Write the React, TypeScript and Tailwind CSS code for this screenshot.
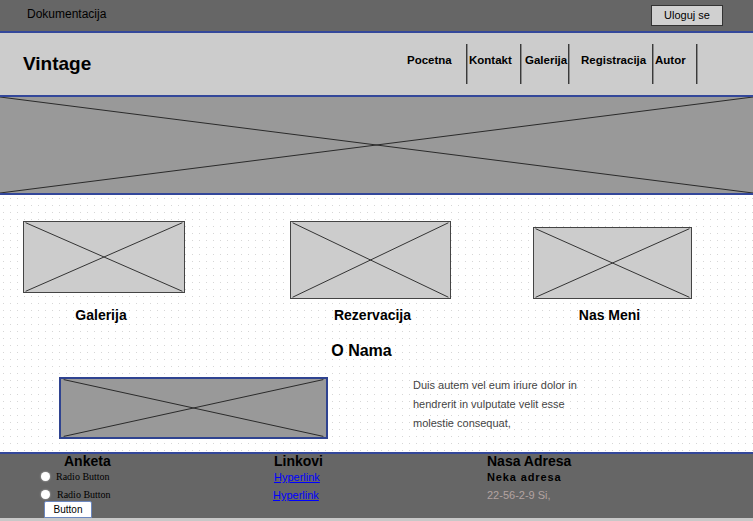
import React from 'react';

function XBox({ className, stroke = '#333', inset = 1 }: { className: string; stroke?: string; inset?: number }) {
  const a = inset;
  const b = 100 - inset;
  return (
    <div className={`relative ${className}`}>
      <svg className="absolute inset-0 h-full w-full" viewBox="0 0 100 100" preserveAspectRatio="none">
        <line x1={a} y1={a} x2={b} y2={b} stroke={stroke} strokeWidth="1" vectorEffect="non-scaling-stroke" />
        <line x1={a} y1={b} x2={b} y2={a} stroke={stroke} strokeWidth="1" vectorEffect="non-scaling-stroke" />
      </svg>
    </div>
  );
}

function NavSep() {
  return (
    <div className="flex h-full">
      <div className="w-px bg-[#3a3a3a]" />
      <div className="w-px bg-[#8a8a8a]" />
    </div>
  );
}

function Radio({ label, offset }: { label: string; offset: string }) {
  return (
    <div className="flex h-[18px] items-center">
      <div className="h-[9px] w-[9px] rounded-full bg-white shadow-[0_0_2px_#ccc]" />
      <span className={`${offset} font-['Liberation_Serif',serif] text-[10px] text-black`}>{label}</span>
    </div>
  );
}

export default function App() {
  const navItems = [
    { label: 'Pocetna', w: 'w-[59px]', pl: 'pl-0' },
    { label: 'Kontakt', w: 'w-[52px]', pl: 'pl-[1px]' },
    { label: 'Galerija', w: 'w-[46px]', pl: 'pl-[3px]' },
    { label: 'Registracija', w: 'w-[82px]', pl: 'pl-[11px]' },
    { label: 'Autor', w: 'w-[42px]', pl: 'pl-[1px]' },
  ];

  return (
    <div className="h-[521px] w-[753px] overflow-hidden bg-white font-['Liberation_Sans',Arial,sans-serif]">
      {/* top bar */}
      <div className="flex h-[31px] items-center justify-between bg-[#666666] pl-[27px] pr-[30px]">
        <span className="-mt-[4px] text-[12px] text-black">Dokumentacija</span>
        <button className="h-[21px] w-[72px] border border-[#333] bg-[#d0d0d0] text-[11px] text-black">Uloguj se</button>
      </div>
      <div className="h-[2px] bg-[#33479a]" />

      {/* nav */}
      <div className="flex h-[62px] items-center bg-[#cccccc]">
        <h1 className="pl-[23px] text-[19px] font-bold text-black">Vintage</h1>
        <div className="ml-auto mr-[55px] flex h-[40px]">
          {navItems.map((item) => (
            <React.Fragment key={item.label}>
              <div className={`${item.w} ${item.pl} pt-[10px] text-[11.5px] font-bold leading-[13px] text-black`}>{item.label}</div>
              <NavSep />
            </React.Fragment>
          ))}
        </div>
      </div>
      <div className="h-[2px] bg-[#33479a]" />

      {/* hero */}
      <XBox className="h-[96px] bg-[#999999]" stroke="#2a2a2a" inset={0} />
      <div className="h-[2px] bg-[#33479a]" />

      {/* main */}
      <div className="h-[257px] bg-white bg-[radial-gradient(#d6d6d6_0.7px,transparent_0.8px)] bg-[size:7px_7px] pt-[24px]">
        <div className="flex pl-[23px]">
          <div className="flex w-[162px] flex-col items-center">
            <div className="h-[80px] w-full pt-[2px]">
              <XBox className="h-[72px] w-full border border-[#444] bg-[#cccccc]" />
            </div>
            <div className="mt-[8px] pr-[6px] text-[14px] font-bold leading-[17px] text-black">Galerija</div>
          </div>
          <div className="ml-[105px] flex w-[161px] flex-col items-center">
            <div className="h-[80px] w-full pt-[2px]">
              <XBox className="h-[78px] w-full border border-[#444] bg-[#cccccc]" />
            </div>
            <div className="mt-[8px] pl-[4px] text-[14px] font-bold leading-[17px] text-black">Rezervacija</div>
          </div>
          <div className="ml-[82px] flex w-[159px] flex-col items-center">
            <div className="h-[80px] w-full pt-[8px]">
              <XBox className="h-[72px] w-full border border-[#444] bg-[#cccccc]" />
            </div>
            <div className="mt-[8px] pr-[6px] text-[14px] font-bold leading-[17px] text-black">Nas Meni</div>
          </div>
        </div>

        <h2 className="mt-[17px] pr-[30px] text-center text-[16px] font-bold leading-[20px] text-black">O Nama</h2>

        <div className="mt-[16px] flex pl-[59px]">
          <XBox className="h-[62px] w-[269px] border-2 border-[#2f4390] bg-[#999999]" stroke="#2a2a2a" />
          <p className="-mt-[1px] ml-[85px] text-[11px] leading-[19px] text-[#444]">
            Duis autem vel eum iriure dolor in
            <br />
            hendrerit in vulputate velit esse
            <br />
            molestie consequat,
          </p>
        </div>
      </div>

      {/* footer */}
      <div className="h-[2px] bg-[#33479a]" />
      <div className="flex h-[64px] bg-[#666666] pl-[41px]">
        <div className="flex w-[233px] flex-col items-start">
          <div className="pl-[23px] text-[14px] font-bold leading-[14px] text-black">Anketa</div>
          <Radio label="Radio Button" offset="ml-[6px]" />
          <Radio label="Radio Button" offset="ml-[7px]" />
          <button className="-mt-[2px] ml-[3px] block h-[17px] w-[48px] rounded-t-[2px] border border-[#6b87bf] bg-white text-[10px] leading-[14px] text-black">
            Button
          </button>
        </div>
        <div className="w-[213px]">
          <div className="text-[14px] font-bold leading-[14px] text-black">Linkovi</div>
          <a className="block text-[11px] leading-[18px] text-[#0000ff] underline">Hyperlink</a>
          <a className="-ml-[1px] block text-[11px] leading-[18px] text-[#0000ff] underline">Hyperlink</a>
        </div>
        <div>
          <div className="text-[14px] font-bold leading-[14px] text-black">Nasa Adresa</div>
          <div className="text-[11px] font-bold leading-[18px] tracking-[0.08em] text-black">Neka adresa</div>
          <div className="text-[11px] leading-[18px] text-[#b3a3a1]">22-56-2-9 Si,</div>
        </div>
      </div>
      <div className="h-[3px] bg-[#c8c8c8]" />
    </div>
  );
}
